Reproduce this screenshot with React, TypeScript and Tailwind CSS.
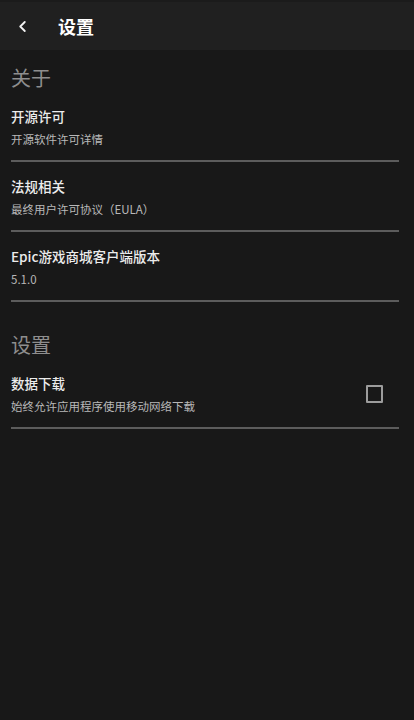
import { useState } from 'react';

const FONT = { fontFamily: '"Noto Sans CJK SC", "Noto Sans", sans-serif' };

interface RowProps {
  title: string;
  subtitle: string;
  checkbox?: boolean;
  checked?: boolean;
  onToggle?: () => void;
}

function SettingRow({ title, subtitle, checkbox, checked, onToggle }: RowProps) {
  return (
    <div className="pl-[11px] pr-[15px]">
      <div className="flex items-center pt-[14px] pb-[12px] pr-[16px]">
        <div className="flex-1 min-w-0">
          <div className="text-[13.5px] leading-[20px] font-medium text-[#ececec]">{title}</div>
          <div className="mt-[4px] text-[11.5px] leading-[18px] text-[#b8b8b8]">{subtitle}</div>
        </div>
        {checkbox && (
          <button
            onClick={onToggle}
            className="w-[17px] h-[18px] border-2 border-[#9c9c9c] rounded-[1px] flex items-center justify-center"
          >
            {checked && (
              <svg viewBox="0 0 12 12" className="w-[11px] h-[11px]">
                <path d="M2 6.5l2.5 2.5L10 3.5" fill="none" stroke="#d0d0d0" strokeWidth="2" />
              </svg>
            )}
          </button>
        )}
      </div>
      <div className="h-[2px] bg-[#5c5c5c]" />
    </div>
  );
}

function SectionHeader({ label }: { label: string }) {
  return <div className="px-[11px] text-[20px] leading-[28px] text-[#8e8e8e]">{label}</div>;
}

export default function App() {
  const [download, setDownload] = useState(false);

  return (
    <div className="w-[414px] h-[720px] bg-[#181818] overflow-hidden" style={FONT}>
      {/* Top bar */}
      <div className="h-[50px] bg-[#202020] border-t-2 border-[#1b1b1b] flex items-center">
        <button className="w-[44px] h-full flex items-center justify-center">
          <svg viewBox="0 0 10 12" className="w-[9px] h-[11px]">
            <path d="M7.5 1L2.5 6l5 5" fill="none" stroke="#f2f2f2" strokeWidth="2" strokeLinecap="round" strokeLinejoin="round" />
          </svg>
        </button>
        <div className="ml-[14px] text-[18px] font-bold text-white leading-none">设置</div>
      </div>

      <div className="mt-[14px]">
        <SectionHeader label="关于" />
        <SettingRow title="开源许可" subtitle="开源软件许可详情" />
        <SettingRow title="法规相关" subtitle="最终用户许可协议（EULA）" />
        <SettingRow title="Epic游戏商城客户端版本" subtitle="5.1.0" />
      </div>

      <div className="mt-[29px]">
        <SectionHeader label="设置" />
        <SettingRow
          title="数据下载"
          subtitle="始终允许应用程序使用移动网络下载"
          checkbox
          checked={download}
          onToggle={() => setDownload(!download)}
        />
      </div>
    </div>
  );
}
